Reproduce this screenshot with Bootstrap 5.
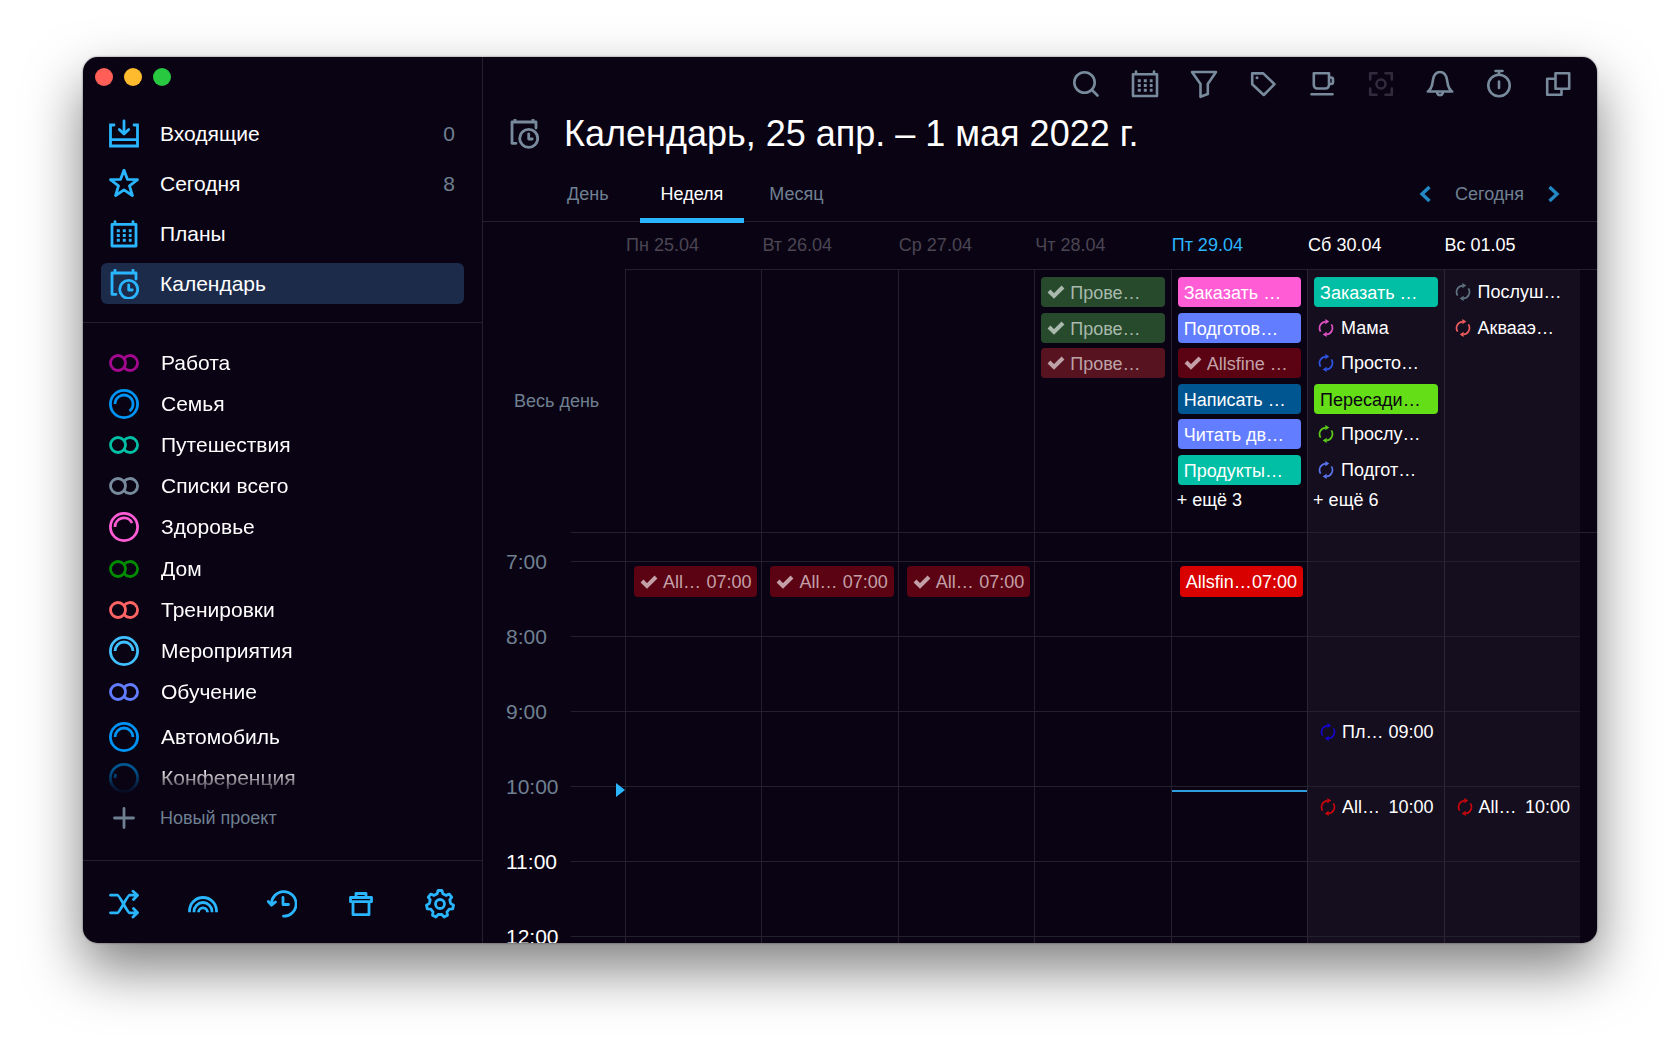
<!DOCTYPE html>
<html lang="ru">
<head>
<meta charset="utf-8">
<meta name="viewport" content="width=device-width, initial-scale=1">
<title>Календарь</title>
<link href="https://cdn.jsdelivr.net/npm/bootstrap@5.3.0/dist/css/bootstrap.min.css" rel="stylesheet">
<style>
  :root { --ink: #0a0314; --rule: #24212e; --dim: #6f8091; --sky: #29b6ff; --past: #4b4653; }
  body { background: #fff; color: #fff; font-family: "Liberation Sans", Arial, sans-serif; font-size: 18px; line-height: 24px; padding: 57px 83px 109px; height: 100vh; overflow: hidden; }
  a { color: inherit; text-decoration: none; }
  button { background: none; border: 0; padding: 0; color: inherit; }
  svg { display: block; flex: none; fill: none; stroke: currentColor; stroke-width: 2.8; stroke-linecap: round; stroke-linejoin: round; }
  .ic { width: 30px; height: 30px; }
  .dim { color: var(--dim); }
  .sky { color: var(--sky); }
  .app-window { background: var(--ink); border-radius: 15px; overflow: hidden; box-shadow: 0 0 2px rgba(0,0,0,.6), 0 26px 56px rgba(0,0,0,.5); }

  .sidebar { width: 400px; border-right: 1px solid var(--rule); }
  .lights { gap: 11px; padding: 11px 12px 0; height: 56px; }
  .light { width: 18px; height: 18px; border-radius: 50%; }
  .light-r { background: #ff5f57; } .light-y { background: #febb2e; } .light-g { background: #28c840; }
  .side-nav { gap: 9px; padding: 0 18px 18px; border-bottom: 1px solid var(--rule); }
  .side-item { height: 41px; padding: 0 9px 0 8px; gap: 21px; border-radius: 6px; font-size: 21px; }
  .side-item.active { background: #1d2b4b; }
  .projects { padding: 19px 26px 0; -webkit-mask-image: linear-gradient(to bottom, #000 calc(100% - 30px), transparent calc(100% - 4px)); mask-image: linear-gradient(to bottom, #000 calc(100% - 30px), transparent calc(100% - 4px)); min-height: 0; }
  .project { flex: 1 1 0; gap: 22px; font-size: 21px; }
  .new-project { padding: 0 26px 24px; height: 61px; gap: 21px; }
  .side-tools { padding: 28px 27px 24px 26px; border-top: 1px solid var(--rule); }

  .topbar { gap: 29px; padding: 12px 24px 0; height: 57px; color: #788b9c; }
  .topbar svg { stroke-width: 2.6; }
  .topbar .off { color: #302c3d; }
  .title-row { padding: 0 26px; gap: 25px; height: 40px; color: #788b9c; }
  .title-row h1 { font-size: 36px; line-height: 40px; color: #fff; font-weight: 400; }
  .views { padding: 28px 37px 0 63px; border-bottom: 1px solid var(--rule); }
  .view-tab { padding: 0 21px 12px; border-bottom: 5px solid transparent; margin-bottom: -2px; color: var(--dim); }
  .view-tab:first-child { margin-right: 10px; }
  .view-tab.active { color: #fff; border-color: var(--sky); }
  .pager { gap: 24px; height: 24px; }
  .pager svg { width: 12px; height: 18px; stroke-width: 3.4; color: #2388c4; stroke-linecap: butt; stroke-linejoin: miter; }

  .wk { display: flex; }
  .wk-label { width: 88px; flex: none; padding-left: 23px; }
  .wk-stub { width: 54px; flex: none; }
  .wk-side { width: 142px; flex: none; padding-left: 31px; }
  .wk-cell { flex: 1 1 0; min-width: 0; border-left: 1px solid var(--rule); white-space: nowrap; }
  .wk-gut { width: 17px; flex: none; }
  .wk-end { background: #150e1f; }
  .wk-end, .wk-end + .wk-end { border-color: #2a2734; }
  .day-names { height: 47px; padding-top: 11px; }
  .day-names .wk-cell { border-color: transparent; background: none; }
  .past { color: var(--past); }
  .all-day { height: 263px; }
  .all-day .wk-cell, .all-day .wk-gut, .hour .wk-stub, .hour .wk-cell { border-top: 1px solid var(--rule); }
  .all-day .wk-cell { padding: 7px 6px 20px; display: grid; grid-template-rows: 1fr 22px; }
  .slots { display: grid; grid-template-rows: repeat(6, 1fr); }
  .more { line-height: 20px; margin-left: -1px; }
  .chip { height: 30px; border-radius: 4px; padding: 8px 6px 0; width: 100%; display: flex; text-align: left; }
  .chip span { line-height: 16px; overflow: hidden; }
  .chip svg { width: 18px; height: 14px; stroke-width: 4; stroke-linecap: butt; stroke-linejoin: miter; margin-right: 5px; }
  .loop { height: 30px; padding: 0 4px; display: flex; align-items: center; gap: 7px; text-align: left; }
  .loop svg, .timed .rec { width: 16px; height: 18px; stroke-width: 1.7; stroke-linecap: butt; }
  .c-pink { background: #ff5cd6; } .c-indigo { background: #627dff; } .c-navy { background: #005690; }
  .c-teal { background: #00bfa5; } .c-lime { background: #64de16; color: #0a0314; } .c-red { background: #d90000; }
  .c-wine { background: #5c0313; color: #c3a0a8; } .c-moss { background: #264a2b; color: #a9b9ad; } .c-brick { background: #571420; color: #bda2a7; }
  .hours { min-height: 0; overflow: hidden; }
  .hour { height: 75px; flex: none; }
  .hour.lead-in { height: 29px; }
  .lead-in .wk-gut { border-top: 1px solid var(--rule); }
  .hour .wk-label { font-size: 21px; line-height: 24px; margin-top: -11px; }
  .hour .wk-cell { padding: 4px 4px 0 8px; }
  .timed { height: 31px; width: 100%; border-radius: 4px; padding: 0 6px; display: flex; align-items: center; }
  .timed time { margin-left: auto; }
  .timed .chk { width: 18px; height: 14px; stroke-width: 4; stroke-linecap: butt; stroke-linejoin: miter; margin-right: 5px; }
  .timed .rec { margin-right: 6px; margin-left: -2px; }
  .now-here { position: relative; }
  .now-line { position: absolute; left: 0; right: 0; top: 3px; height: 2px; background: #2e9fdc; }
  .now-tip { position: absolute; right: 0; top: -4px; border: solid transparent; border-width: 7px 0 7px 9px; border-left-color: var(--sky); }
</style>
<script src="https://cdn.jsdelivr.net/npm/bootstrap@5.3.0/dist/js/bootstrap.bundle.min.js"></script>
</head>
<body>
<svg width="0" height="0" class="position-absolute" aria-hidden="true">
  <symbol id="cal" viewBox="0 0 30 30"><path d="M3 5.3H27V27H3ZM6 2.6V5M24 2.6V5"/><path stroke-linecap="butt" stroke-width="3" stroke-dasharray="3 3" d="M7.8 11.8H22.6M7.8 16.5H22.6M7.8 21.2H22.6"/></symbol>
  <symbol id="calclock" viewBox="0 0 30 32"><path d="M7 26.3H3V5H27V11M6 2V5M24 2V5"/><circle cx="19.7" cy="21.400" r="9"/><path d="M19.7 17V22H23.2"/></symbol>
  <symbol id="rings" viewBox="0 0 30 30"><circle cx="9" cy="15" r="7.5"/><path stroke-linecap="butt" d="M15 10.6A7.5 7.5 0 1 1 15 19.4"/></symbol>
  <symbol id="check" viewBox="0 0 18 14"><path d="M2 6L7 11L16 2"/></symbol>
  <symbol id="loop" viewBox="0 0 16 18"><path d="M2.6 12.6A6.5 6.5 0 0 1 7.5 2.6M13.4 5.4A6.5 6.5 0 0 1 8.5 15.4"/><path stroke="none" fill="currentColor" d="M7.3 0L11.3 2.6L7.3 5.2ZM8.7 18L4.7 15.4L8.7 12.8Z"/></symbol>
</svg>

<div class="app-window d-flex h-100">
  <aside class="sidebar d-flex flex-column flex-shrink-0">
    <div class="lights d-flex flex-shrink-0"><span class="light light-r"></span><span class="light light-y"></span><span class="light light-g"></span></div>
    <nav class="side-nav d-flex flex-column flex-shrink-0">
      <a href="#" class="side-item d-flex align-items-center"><svg class="ic sky" viewBox="0 0 30 30"><path stroke-linejoin="miter" d="M5 6H1.500V27H28.500V6H25M2 20.700H28"/><path d="M15 2V14M10.300 10.500L15 15L19.700 10.500"/></svg><span>Входящие</span><span class="dim ms-auto">0</span></a>
      <a href="#" class="side-item d-flex align-items-center"><svg class="ic sky" viewBox="0 0 30 30"><path d="M15 1L18.4 10.3L28.5 10.7L20.5 16.8L23.4 26.5L15 20.9L6.600 26.500L9.500 16.800L1.500 10.700L11.600 10.300Z"/></svg><span>Сегодня</span><span class="dim ms-auto">8</span></a>
      <a href="#" class="side-item d-flex align-items-center"><svg class="ic sky"><use href="#cal"/></svg><span>Планы</span></a>
      <a href="#" class="side-item active d-flex align-items-center"><svg class="ic sky" viewBox="0 1 30 30"><use href="#calclock" width="30" height="32"/></svg><span>Календарь</span></a>
    </nav>
    <div class="projects d-flex flex-column flex-grow-1">
      <a href="#" class="project d-flex align-items-center"><svg class="ic" color="#a3098f"><use href="#rings"/></svg>Работа</a>
      <a href="#" class="project d-flex align-items-center"><svg class="ic" color="#0094f5" viewBox="0 0 30 30"><circle cx="15" cy="15" r="13.6"/><path stroke-linecap="butt" d="M6 15A9 9 0 1 1 20.500 22.200"/></svg>Семья</a>
      <a href="#" class="project d-flex align-items-center"><svg class="ic" color="#00bfa5"><use href="#rings"/></svg>Путешествия</a>
      <a href="#" class="project d-flex align-items-center"><svg class="ic" color="#788b9c"><use href="#rings"/></svg>Списки всего</a>
      <a href="#" class="project d-flex align-items-center"><svg class="ic" color="#ff5cd6" viewBox="0 0 30 30"><circle cx="15" cy="15" r="13.6"/><path stroke-linecap="butt" d="M6 15A9 9 0 0 1 23.100 11"/></svg>Здоровье</a>
      <a href="#" class="project d-flex align-items-center"><svg class="ic" color="#008c00"><use href="#rings"/></svg>Дом</a>
      <a href="#" class="project d-flex align-items-center"><svg class="ic" color="#ff6464"><use href="#rings"/></svg>Тренировки</a>
      <a href="#" class="project d-flex align-items-center"><svg class="ic" color="#40c0ff" viewBox="0 0 30 30"><circle cx="15" cy="15" r="13.6"/><path stroke-linecap="butt" d="M6 15A9 9 0 0 1 24 15"/></svg>Мероприятия</a>
      <a href="#" class="project d-flex align-items-center"><svg class="ic" color="#627dff"><use href="#rings"/></svg>Обучение</a>
      <a href="#" class="project d-flex align-items-center mt-1"><svg class="ic" color="#0094f5" viewBox="0 0 30 30"><circle cx="15" cy="15" r="13.6"/><path stroke-linecap="butt" d="M6 15A9 9 0 0 1 24 15"/></svg>Автомобиль</a>
      <a href="#" class="project d-flex align-items-center"><svg class="ic" color="#005690" viewBox="0 0 30 30"><circle cx="15" cy="15" r="13.6"/><path stroke-linecap="butt" d="M6 15A9 9 0 0 1 6.800 11"/></svg>Конференция</a>
    </div>
    <button type="button" class="new-project dim d-flex align-items-center flex-shrink-0"><svg class="ic" viewBox="0 0 30 30"><path d="M5.500 15H24.500M15 5.500V24.500"/></svg>Новый проект</button>
    <div class="side-tools sky d-flex justify-content-between flex-shrink-0">
      <button type="button" aria-label="Перемешать"><svg class="ic" viewBox="0 0 30 30"><path d="M1.500 6.200H8.500C10.500 6.200 18.500 23.800 20.500 23.800H28M1.500 23.800H8.500C10.500 23.800 18.500 6.200 20.500 6.200H28M24 2.200L28.500 6.200L24.500 10.500M24.500 19.500L28.500 23.800L24 28"/></svg></button>
      <button type="button" aria-label="Радуга"><svg class="ic" viewBox="0 0 30 30"><path stroke-linecap="butt" d="M1.500 23.300V22A13.500 13.500 0 0 1 28.500 22V23.300M6 23.300V22.500A9 9 0 0 1 24 22.500V23.300M10.500 23.300A4.500 4.500 0 0 1 19.500 23.300"/></svg></button>
      <button type="button" aria-label="История"><svg class="ic" viewBox="0 0 30 30"><path d="M4.500 15.500A12.300 12.300 0 1 1 16.500 27.200M1.300 12.500L4.500 16.200L8.500 13M16 8.500V15.500H21.500"/></svg></button>
      <button type="button" aria-label="Корзина"><svg class="ic" viewBox="0 0 30 30"><path d="M4.500 8.500H25.500V12.700H4.500ZM10 8V4.500H20V8M7 13V25.700H23V13"/></svg></button>
      <button type="button" aria-label="Настройки"><svg class="ic" viewBox="0 0 30 30"><path d="M13.100 1.500L16.900 1.500L17.900 4.800L21.100 6.400L24.300 5.100L26.700 8.100L24.800 10.900L25.600 14.400L28.500 16.200L27.700 19.900L24.300 20.100L22 22.900L22.500 26.300L19.100 28L16.800 25.500L13.200 25.500L10.900 28L7.500 26.300L8 22.900L5.700 20.100L2.300 19.900L1.500 16.200L4.400 14.400L5.200 10.900L3.300 8.100L5.700 5.100L8.900 6.400L12.100 4.800Z"/><circle cx="15" cy="15" r="4.500"/></svg></button>
    </div>
  </aside>

  <main class="d-flex flex-column flex-grow-1 overflow-hidden">
    <div class="topbar d-flex justify-content-end flex-shrink-0">
      <button type="button" aria-label="Поиск" class="align-self-start"><svg class="ic" viewBox="0 0 30 30"><circle cx="13.500" cy="13.500" r="10.200"/><path d="M21 21L26.500 26.500"/></svg></button>
      <button type="button" aria-label="Планы" class="align-self-start"><svg class="ic"><use href="#cal"/></svg></button>
      <button type="button" aria-label="Фильтр" class="align-self-start"><svg class="ic" viewBox="0 0 30 30"><path d="M3 3H27L18.800 15V25L11.500 27.800V15Z"/></svg></button>
      <button type="button" aria-label="Метки" class="align-self-start"><svg class="ic" viewBox="0 0 30 30"><path d="M4.200 4.400H15.200L26.500 15.200L15.800 26L4.200 15.200Z"/><circle cx="9" cy="8.800" r="1.500" fill="currentColor" stroke="none"/></svg></button>
      <button type="button" aria-label="Перерыв" class="align-self-start"><svg class="ic" viewBox="0 0 30 30"><path d="M6.800 4.200H22V16A3.500 3.500 0 0 1 18.500 19.500H10.300A3.500 3.500 0 0 1 6.800 16ZM22 8.500H24A2 2 0 0 1 26 10.500V13A2 2 0 0 1 24 15H22M4.500 25.200H25.500"/></svg></button>
      <button type="button" aria-label="Фокус" class="align-self-start off"><svg class="ic" viewBox="0 0 30 30" stroke-linecap="butt"><path d="M4.200 10.500V4.200H10.500M19.500 4.200H25.800V10.500M25.800 19.500V25.800H19.500M10.500 25.800H4.200V19.500"/><circle cx="15" cy="15" r="4.500"/></svg></button>
      <button type="button" aria-label="Уведомления" class="align-self-start"><svg class="ic" viewBox="0 0 30 30"><path d="M2.800 22.500C7 20 7.200 15.500 8 10.800C8.700 6.500 11 3 15 3S21.300 6.500 22 10.800C22.800 15.500 23 20 27.200 22.500ZM12.200 24.200A3 3 0 0 0 17.800 24.200"/></svg></button>
      <button type="button" aria-label="Таймер" class="align-self-start"><svg class="ic" viewBox="0 0 30 30"><circle cx="15" cy="16.500" r="10.700"/><path d="M11.500 2H18.500M15 2V5M15 12.500V19"/></svg></button>
      <button type="button" aria-label="Окна" class="align-self-start"><svg class="ic" viewBox="0 0 30 30"><path d="M12.500 4.200H26.200V19.800H12.500ZM12 9.800H4.200V25.800H18.500V20.500"/></svg></button>
    </div>
    <div class="title-row d-flex align-items-center flex-shrink-0">
      <svg class="ic" viewBox="0 2 30 30"><use href="#calclock" width="30" height="32"/></svg>
      <h1 class="m-0 text-nowrap">Календарь, 25 апр. – 1 мая 2022 г.</h1>
    </div>
    <div class="views d-flex flex-shrink-0">
      <a href="#" class="view-tab">День</a>
      <a href="#" class="view-tab active me-1">Неделя</a>
      <a href="#" class="view-tab">Месяц</a>
      <div class="pager dim d-flex align-items-center ms-auto">
        <button type="button" aria-label="Назад"><svg viewBox="0 0 12 18"><path d="M10.500 2L3 9L10.500 16"/></svg></button>
        <button type="button">Сегодня</button>
        <button type="button" aria-label="Вперёд"><svg viewBox="0 0 12 18"><path d="M1.500 2L9 9L1.500 16"/></svg></button>
      </div>
    </div>

    <div class="wk day-names flex-shrink-0">
      <div class="wk-side"></div>
      <div class="wk-cell past">Пн 25.04</div><div class="wk-cell past">Вт 26.04</div><div class="wk-cell past">Ср 27.04</div><div class="wk-cell past">Чт 28.04</div><div class="wk-cell sky">Пт 29.04</div><div class="wk-cell">Сб 30.04</div><div class="wk-cell">Вс 01.05</div>
      <div class="wk-gut"></div>
    </div>

    <div class="wk all-day flex-shrink-0">
      <div class="wk-side dim align-self-center">Весь день</div>
      <div class="wk-cell"></div><div class="wk-cell"></div><div class="wk-cell"></div>
      <div class="wk-cell">
        <div class="slots">
          <button type="button" class="chip c-moss"><svg><use href="#check"/></svg><span>Прове…</span></button>
          <button type="button" class="chip c-moss"><svg><use href="#check"/></svg><span>Прове…</span></button>
          <button type="button" class="chip c-brick"><svg><use href="#check"/></svg><span>Прове…</span></button>
        </div>
      </div>
      <div class="wk-cell">
        <div class="slots">
          <button type="button" class="chip c-pink"><span>Заказать …</span></button>
          <button type="button" class="chip c-indigo"><span>Подготов…</span></button>
          <button type="button" class="chip c-wine"><svg><use href="#check"/></svg><span>Allsfine …</span></button>
          <button type="button" class="chip c-navy"><span>Написать …</span></button>
          <button type="button" class="chip c-indigo"><span>Читать дв…</span></button>
          <button type="button" class="chip c-teal"><span>Продукты…</span></button>
        </div>
        <a href="#" class="more">+ ещё 3</a>
      </div>
      <div class="wk-cell wk-end">
        <div class="slots">
          <button type="button" class="chip c-teal"><span>Заказать …</span></button>
          <button type="button" class="loop"><svg color="#e052c4"><use href="#loop"/></svg>Мама</button>
          <button type="button" class="loop"><svg color="#2f55e8"><use href="#loop"/></svg>Просто…</button>
          <button type="button" class="chip c-lime"><span>Пересади…</span></button>
          <button type="button" class="loop"><svg color="#5ccc18"><use href="#loop"/></svg>Прослу…</button>
          <button type="button" class="loop"><svg color="#5a74ee"><use href="#loop"/></svg>Подгот…</button>
        </div>
        <a href="#" class="more">+ ещё 6</a>
      </div>
      <div class="wk-cell wk-end">
        <div class="slots">
          <button type="button" class="loop"><svg color="#5f7480"><use href="#loop"/></svg>Послуш…</button>
          <button type="button" class="loop"><svg color="#ee5c5c"><use href="#loop"/></svg>Аквааэ…</button>
        </div>
      </div>
      <div class="wk-gut"></div>
    </div>

    <div class="hours flex-grow-1 d-flex flex-column">
      <div class="wk hour lead-in"><div class="wk-label"></div><div class="wk-stub"></div><div class="wk-cell"></div><div class="wk-cell"></div><div class="wk-cell"></div><div class="wk-cell"></div><div class="wk-cell"></div><div class="wk-cell wk-end"></div><div class="wk-cell wk-end"></div><div class="wk-gut"></div></div>
      <div class="wk hour">
        <div class="wk-label dim">7:00</div><div class="wk-stub"></div>
        <div class="wk-cell"><button type="button" class="timed c-wine"><svg class="chk"><use href="#check"/></svg>All…<time>07:00</time></button></div>
        <div class="wk-cell"><button type="button" class="timed c-wine"><svg class="chk"><use href="#check"/></svg>All…<time>07:00</time></button></div>
        <div class="wk-cell"><button type="button" class="timed c-wine"><svg class="chk"><use href="#check"/></svg>All…<time>07:00</time></button></div>
        <div class="wk-cell"></div>
        <div class="wk-cell"><button type="button" class="timed c-red">Allsfin…<time>07:00</time></button></div>
        <div class="wk-cell wk-end"></div><div class="wk-cell wk-end"></div><div class="wk-gut"></div>
      </div>
      <div class="wk hour"><div class="wk-label dim">8:00</div><div class="wk-stub"></div><div class="wk-cell"></div><div class="wk-cell"></div><div class="wk-cell"></div><div class="wk-cell"></div><div class="wk-cell"></div><div class="wk-cell wk-end"></div><div class="wk-cell wk-end"></div><div class="wk-gut"></div></div>
      <div class="wk hour">
        <div class="wk-label dim">9:00</div><div class="wk-stub"></div>
        <div class="wk-cell"></div><div class="wk-cell"></div><div class="wk-cell"></div><div class="wk-cell"></div><div class="wk-cell"></div>
        <div class="wk-cell wk-end"><button type="button" class="timed"><svg class="rec" color="#1505c8"><use href="#loop"/></svg>Пл…<time>09:00</time></button></div>
        <div class="wk-cell wk-end"></div><div class="wk-gut"></div>
      </div>
      <div class="wk hour">
        <div class="wk-label dim">10:00</div><div class="wk-stub now-here"><span class="now-tip"></span></div>
        <div class="wk-cell"></div><div class="wk-cell"></div><div class="wk-cell"></div><div class="wk-cell"></div>
        <div class="wk-cell now-here"><span class="now-line"></span></div>
        <div class="wk-cell wk-end"><button type="button" class="timed"><svg class="rec" color="#c8060c"><use href="#loop"/></svg>All…<time>10:00</time></button></div>
        <div class="wk-cell wk-end"><button type="button" class="timed"><svg class="rec" color="#c8060c"><use href="#loop"/></svg>All…<time>10:00</time></button></div>
        <div class="wk-gut"></div>
      </div>
      <div class="wk hour"><div class="wk-label">11:00</div><div class="wk-stub"></div><div class="wk-cell"></div><div class="wk-cell"></div><div class="wk-cell"></div><div class="wk-cell"></div><div class="wk-cell"></div><div class="wk-cell wk-end"></div><div class="wk-cell wk-end"></div><div class="wk-gut"></div></div>
      <div class="wk hour"><div class="wk-label">12:00</div><div class="wk-stub"></div><div class="wk-cell"></div><div class="wk-cell"></div><div class="wk-cell"></div><div class="wk-cell"></div><div class="wk-cell"></div><div class="wk-cell wk-end"></div><div class="wk-cell wk-end"></div><div class="wk-gut"></div></div>
    </div>
  </main>
</div>
</body>
</html>
